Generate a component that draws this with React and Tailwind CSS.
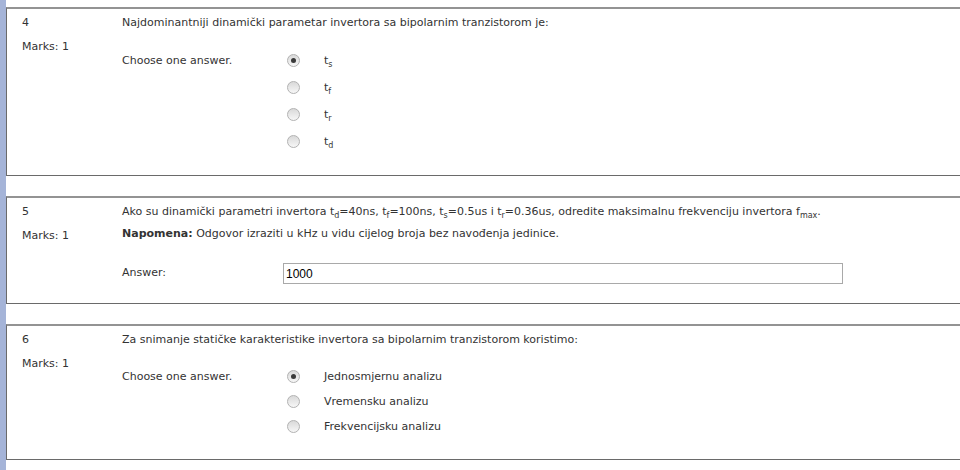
const font = { fontFamily: '"DejaVu Sans", Verdana, sans-serif' };

function Sub({ children }) {
  return <span className="relative top-[3px] text-[8px] leading-none">{children}</span>;
}

function Radio({ checked }) {
  return (
    <span className="w-[13px] h-[13px] shrink-0 rounded-full border border-[#b2b2b2] bg-gradient-to-b from-[#d9d9d9] to-[#f7f7f7] flex items-center justify-center">
      {checked && <span className="w-[5px] h-[5px] rounded-full bg-[#3a3a3a]" />}
    </span>
  );
}

function Card({ num, children }) {
  return (
    <div className="flex w-[1000px] border-t-2 border-t-[#939393] border-l border-l-[#6a6a6a] border-b border-b-[#6a6a6a] bg-white pt-[6px]">
      <div className="w-[115px] shrink-0 pl-[15px]">
        <div className="leading-[16px]">{num}</div>
        <div className="leading-[16px] mt-[8px]">Marks: 1</div>
      </div>
      <div className="flex-1">{children}</div>
    </div>
  );
}

function Choices({ options, rowH }) {
  return (
    <div className="flex mt-[16px] pb-[20px]">
      <div className={`w-[165px] shrink-0 ${rowH === 27 ? "leading-[27px]" : "leading-[25px]"}`}>
        Choose one answer.
      </div>
      <div className="flex flex-col">
        {options.map((o, i) => (
          <div key={i} className={`flex items-center ${rowH === 27 ? "h-[27px]" : "h-[25px]"}`}>
            <Radio checked={i === 0} />
            <span className="ml-[24px] leading-[16px]">{o}</span>
          </div>
        ))}
      </div>
    </div>
  );
}

export default function App() {
  return (
    <div className="w-[960px] h-[470px] overflow-hidden bg-white flex text-[11px] text-[#333]" style={font}>
      <div className="w-[6px] shrink-0 bg-[#a5b4d8]" />
      <div className="flex-1 pt-[7px] flex flex-col gap-[20px]">
        <Card num="4">
          <div className="leading-[16px]">
            Najdominantniji dinamički parametar invertora sa bipolarnim tranzistorom je:
          </div>
          <Choices
            rowH={27}
            options={[
              <>t<Sub>s</Sub></>,
              <>t<Sub>f</Sub></>,
              <>t<Sub>r</Sub></>,
              <>t<Sub>d</Sub></>,
            ]}
          />
        </Card>

        <Card num="5">
          <div className="leading-[16px]">
            Ako su dinamički parametri invertora t<Sub>d</Sub>=40ns, t<Sub>f</Sub>=100ns, t<Sub>s</Sub>=0.5us i t<Sub>r</Sub>=0.36us, odredite maksimalnu frekvenciju invertora f<Sub>max</Sub>.
          </div>
          <div className="leading-[16px] mt-[6px]">
            <b>Napomena:</b> Odgovor izraziti u kHz u vidu cijelog broja bez navođenja jedinice.
          </div>
          <div className="flex items-center mt-[21px] pb-[19px]">
            <div className="w-[161px] shrink-0">Answer:</div>
            <div
              className="w-[560px] h-[21px] border border-[#a9a9a9] bg-white px-[2px] flex items-center text-[12px] text-black"
              style={{ fontFamily: '"Liberation Sans", Arial, sans-serif' }}
            >
              1000
            </div>
          </div>
        </Card>

        <Card num="6">
          <div className="leading-[16px]">
            Za snimanje statičke karakteristike invertora sa bipolarnim tranzistorom koristimo:
          </div>
          <Choices
            rowH={25}
            options={["Jednosmjernu analizu", "Vremensku analizu", "Frekvencijsku analizu"]}
          />
        </Card>
      </div>
    </div>
  );
}
